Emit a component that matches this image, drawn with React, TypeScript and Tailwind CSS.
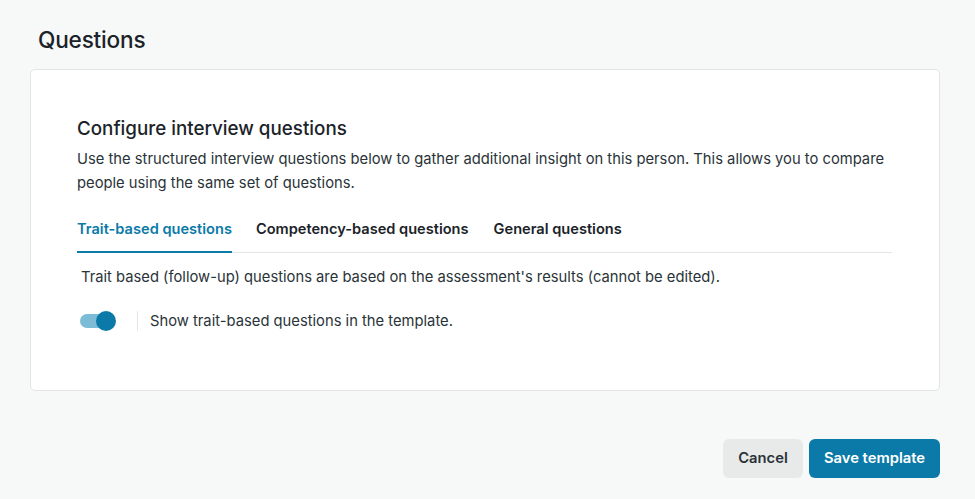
export default function App() {
  return (
    <div
      className="w-[975px] h-[499px] bg-[#f7f8f8] text-[#1b2329] overflow-hidden"
      style={{ fontFamily: "Inter, 'Noto Sans', sans-serif" }}
    >
      <div className="pt-[24px] pl-[38px]">
        <h1 className="text-[22.6px] leading-[32px] font-medium tracking-[-0.2px]">Questions</h1>
      </div>
      <div className="mt-[13px] ml-[30px] w-[910px] h-[322px] bg-white border border-[#e3e5e6] rounded-[5px] pl-[46px] pr-[47px] pt-[45px]">
        <h2 className="text-[18.8px] leading-[28px] font-medium">Configure interview questions</h2>
        <p className="mt-[4px] text-[14.75px] leading-[24px] text-[#2a3338]">
          Use the structured interview questions below to gather additional insight on this person. This allows you to compare
          people using the same set of questions.
        </p>
        <div className="mt-[22px] flex border-b border-[#e3e5e6] text-[14.6px] font-semibold">
          <div className="pb-[10px] pt-[2px] text-[#0b7aa8] border-b-2 border-[#0b7aa8] -mb-px">Trait-based questions</div>
          <div className="ml-[24px] pb-[10px] pt-[2px]">Competency-based questions</div>
          <div className="ml-[25px] pb-[10px] pt-[2px]">General questions</div>
        </div>
        <p className="mt-[14px] ml-[4px] text-[14.75px] leading-[20px] text-[#2a3338]">
          Trait based (follow-up) questions are based on the assessment's results (cannot be edited).
        </p>
        <div className="mt-[24px] flex items-center">
          <div className="relative w-[36px] h-[20px] ml-[3px] flex items-center">
            <div className="w-[32px] h-[14px] rounded-full bg-[#7cbcd6]" />
            <div className="absolute right-0 top-0 w-[20px] h-[20px] rounded-full bg-[#0b7aa8]" />
          </div>
          <div className="ml-[21px] w-px h-[20px] bg-[#e3e5e6]" />
          <span className="ml-[12px] text-[14.75px] leading-[20px] text-[#2a3338]">Show trait-based questions in the template.</span>
        </div>
      </div>
      <div className="mt-[48px] flex justify-end pr-[35px] gap-[6px]">
        <button className="h-[39px] w-[80px] rounded-[6px] bg-[#e8e9e9] text-[14.75px] font-semibold text-[#2a3338]">Cancel</button>
        <button className="h-[39px] w-[131px] rounded-[6px] bg-[#0b7aa8] text-[14.75px] font-semibold text-white">Save template</button>
      </div>
    </div>
  );
}
